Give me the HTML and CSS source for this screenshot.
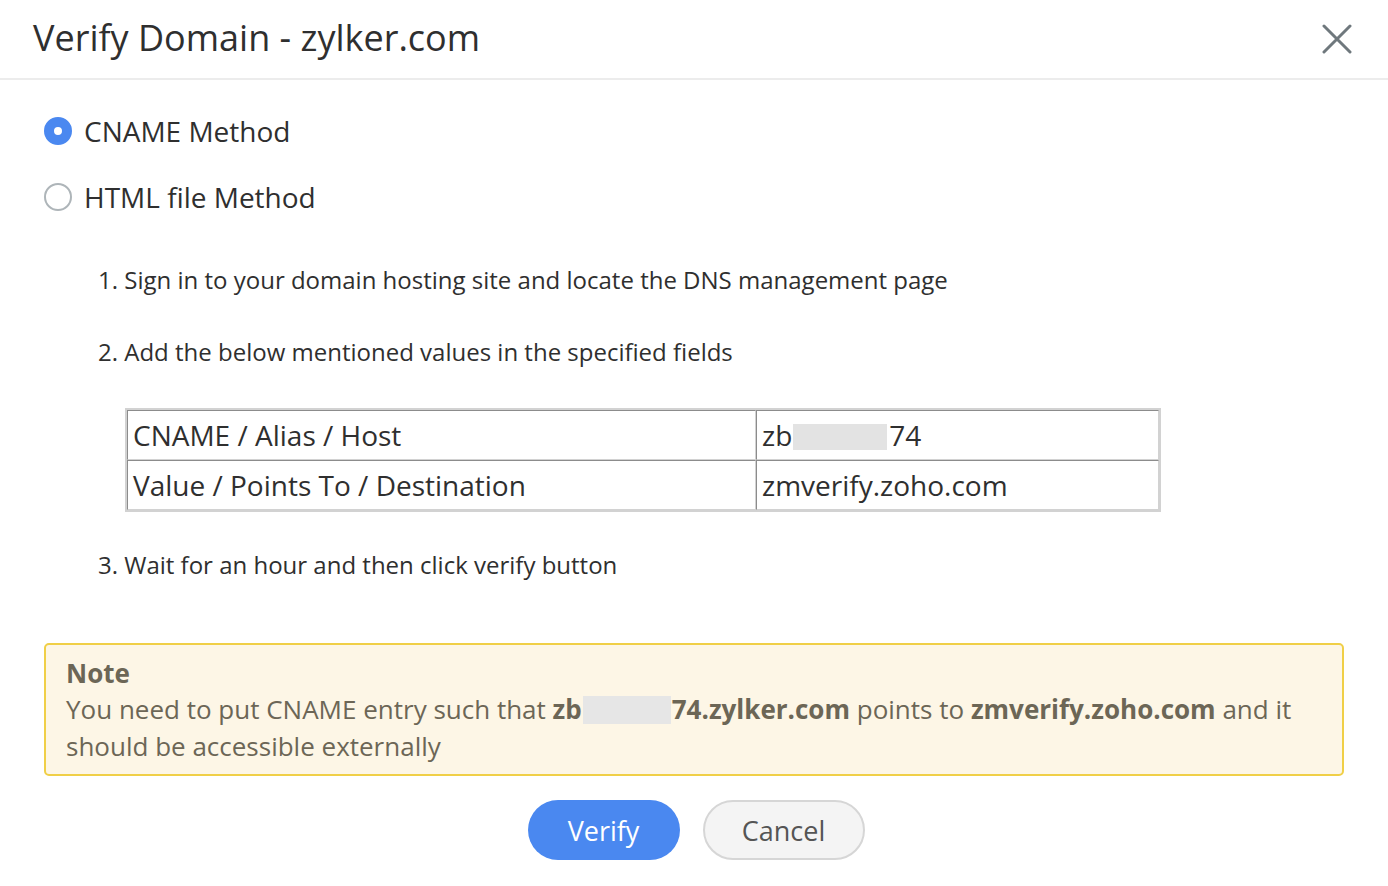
FILE: index.html
```html
<!DOCTYPE html>
<html>
<head>
<meta charset="utf-8">
<link rel="stylesheet" href="styles.css">
</head>
<body>
<div class="dialog">
  <div class="header">
    <h1 class="title">Verify Domain - zylker.com</h1>
    <button class="close" aria-label="Close">
      <svg width="30" height="30" viewBox="0 0 30 30"><path d="M2 2 L28 28 M28 2 L2 28" stroke="#6f787d" stroke-width="3" stroke-linecap="round"/></svg>
    </button>
  </div>
  <div class="content">
    <div class="methods">
      <label class="radio-row"><span class="radio checked"></span><span>CNAME Method</span></label>
      <label class="radio-row"><span class="radio"></span><span>HTML file Method</span></label>
    </div>
    <div class="steps">
      <p class="step">1. Sign in to your domain hosting site and locate the DNS management page</p>
      <p class="step">2. Add the below mentioned values in the specified fields</p>
      <table class="dns">
        <tr><td class="k">CNAME / Alias / Host</td><td class="v">zb<span class="blur b1"></span>74</td></tr>
        <tr><td class="k">Value / Points To / Destination</td><td class="v">zmverify.zoho.com</td></tr>
      </table>
      <p class="step step3">3. Wait for an hour and then click verify button</p>
    </div>
    <div class="note">
      <div class="note-title">Note</div>
      <div class="note-text">You need to put CNAME entry such that <b>zb<span class="blur b2"></span>74.zylker.com</b> points to <b>zmverify.zoho.com</b> and it should be accessible externally</div>
    </div>
    <div class="actions">
      <button class="btn primary">Verify</button>
      <button class="btn secondary">Cancel</button>
    </div>
  </div>
</div>
</body>
</html>
```
FILE: styles.css
```css
* { box-sizing: border-box; }
html, body { margin: 0; padding: 0; background: #fff; }
body { font-family: "Open Sans", "Noto Sans", sans-serif; color: #333; }
.dialog { width: 1388px; }
.header {
  height: 80px;
  border-bottom: 2px solid #ececec;
  display: flex;
  align-items: center;
  justify-content: space-between;
  padding: 0 36px 0 33px;
}
.title { margin: 0; font-weight: 400; font-size: 36px; color: #2f2f2f; line-height: 1; padding-bottom: 2px; }
.close { background: none; border: 0; padding: 0; width: 30px; height: 30px; cursor: pointer; display: flex; }
.content { padding: 18px 44px 0 44px; }
.methods { display: flex; flex-direction: column; }
.radio-row { display: flex; align-items: center; gap: 12px; height: 66px; font-size: 28px; color: #2f2f2f; }
.radio { width: 28px; height: 28px; border-radius: 50%; border: 2px solid #aeb5b9; flex: none; }
.radio.checked { border: 10px solid #4a88f0; background: #fff; }
.steps { padding-left: 54px; padding-top: 34px; }
.step { margin: 0; font-size: 24px; line-height: 32px; color: #2f2f2f; }
.step + .step { margin-top: 40px; }
.dns { margin: 40px 0 37px 27px; border-collapse: separate; border-spacing: 0; border: 2px solid #d2d2d2; width: 1036px; }
.dns td { font-size: 28px; line-height: 48px; padding: 0 5px; border: 1px solid; border-color: #8c8c8c #d2d2d2 #d2d2d2 #8c8c8c; color: #2f2f2f; }
.dns td.k { width: 629px; }
.blur { display: inline-block; vertical-align: middle; background: #e3e3e3; }
.b1 { width: 94px; height: 26px; margin: 0 2px 4px 1px; }
.b2 { width: 88px; height: 28px; margin: 0 1px 4px 1px; background: #e6e6e6; }
.step3 { margin-top: 0; }
.note {
  margin-top: 62px;
  border: 2px solid #f0cf47;
  background: #fdf6e6;
  border-radius: 5px;
  padding: 10px 20px 10px 20px;
  color: #6c6656;
  font-size: 26px;
  line-height: 36px;
}
.note-title { font-weight: 700; }
.note b { font-weight: 700; }
.actions { display: flex; justify-content: center; gap: 23px; padding-top: 24px; padding-left: 4px; }
.btn { height: 60px; border-radius: 30px; font-family: inherit; font-size: 27px; padding: 0; cursor: pointer; }
.primary { width: 152px; background: #4a88f0; color: #fff; border: 0; }
.secondary { width: 162px; background: #f4f4f4; color: #555; border: 2px solid #d6d6d6; }
```
